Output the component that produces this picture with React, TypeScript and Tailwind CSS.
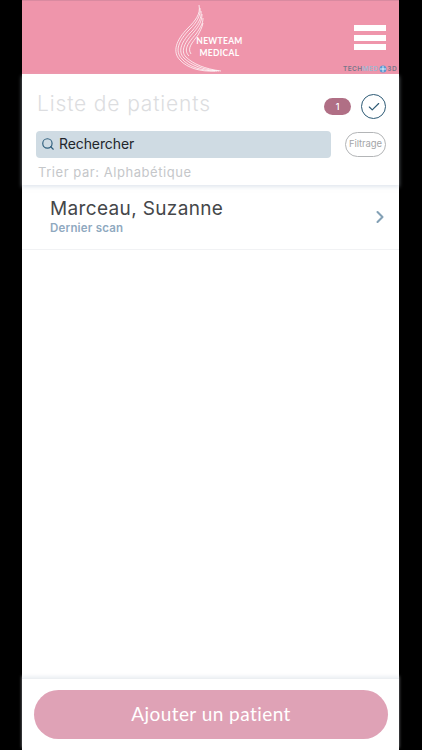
import { Check, ChevronRight, Search } from 'lucide-react';

const swooshLines = [
  'M199 4C201 13 195 20 188 27C176 39 172 51 180 59C187 67 201 71 215 70',
  'M200 7C201 15 196 22 190 28C179 39 174 50 182 58C189 66 202 70 217 70',
  'M201 10C202 17 198 23 192 30C182 40 177 50 184 57C191 64 203 69 219 70',
  'M202 13C202 20 199 25 194 31C185 41 180 50 186 56C193 63 205 68 221 70',
  'M203 17C203 23 200 27 196 33C188 42 183 49 189 55',
  'M203 22C202 27 200 30 198 34C192 42 187 47 191 53',
];

const Logo = () => (
  <div className="relative w-[110px] h-[74px] mr-[12px]">
    <svg viewBox="150 0 110 74" className="w-full h-full" fill="none" stroke="#fff">
      {swooshLines.map((d) => (
        <path key={d} d={d} strokeWidth="0.75" />
      ))}
    </svg>
    <div className="absolute left-[46px] top-[34px] w-[48px] text-center text-white text-[8.5px] leading-[12px] font-bold tracking-[0.3px] font-['Lato',sans-serif]">
      <div>NEWTEAM</div>
      <div>MEDICAL</div>
    </div>
  </div>
);

const App = () => {
  return (
    <div className="w-[422px] h-[750px] bg-black pl-[22px] overflow-hidden font-['Inter',sans-serif]">
      <div className="w-[377px] h-full bg-white flex flex-col">
        {/* Header */}
        <div className="relative h-[74px] bg-[#ef95ab] flex justify-center shrink-0 border-t border-[#d98aa0]">
          <Logo />
          <div className="absolute left-[332px] top-[24px] flex flex-col gap-[3.5px]">
            <div className="w-[32px] h-[6px] bg-white" />
            <div className="w-[32px] h-[6px] bg-white" />
            <div className="w-[32px] h-[6px] bg-white" />
          </div>
          <div className="absolute right-[2px] bottom-[1px] flex items-center text-[6.5px] leading-[8px] font-semibold tracking-[0.4px] text-[#77778a]">
            TECH<span className="text-[#9db8d2]">MED</span>
            <svg viewBox="0 0 8 8" className="w-[8px] h-[8px] mx-[0.5px]">
              <circle cx="4" cy="4" r="3.5" fill="#5b9ad4" />
              <path d="M1 4H7M4 1V7" stroke="#fff" strokeWidth="0.8" />
            </svg>
            3D
          </div>
        </div>

        {/* Title and search */}
        <div className="h-[111px] shrink-0 pl-[14px] pr-[13px] flex flex-col shadow-[0_2px_4px_rgba(200,212,224,0.55)] z-10">
          <div className="flex items-center h-[57px] pt-[8px]">
            <div className="flex-1 pl-[1px] text-[21px] leading-[28px] -mt-[6px] font-light tracking-[0.85px] text-[#dcdde0]">Liste de patients</div>
            <div className="w-[27px] h-[17px] rounded-full bg-[#b06f85] text-white text-[9px] font-medium flex items-center justify-center">1</div>
            <div className="ml-[10px] w-[25px] h-[25px] rounded-full border border-[#2d5a75] flex items-center justify-center">
              <Check size={14} strokeWidth={2} className="text-[#2d5a75]" />
            </div>
          </div>
          <div className="flex items-center">
            <div className="w-[295px] h-[27px] rounded-[4px] bg-[#cfdbe3] flex items-center pl-[5px] gap-[4px]">
              <Search size={14} strokeWidth={2} className="text-[#2f5f7d] -mt-[1px]" />
              <span className="text-[14px] leading-[20px] -mt-[1px] tracking-[-0.1px] text-[#22262b]">Rechercher</span>
            </div>
            <div className="ml-auto w-[41px] h-[25px] rounded-full border border-[#b3b5b7] flex items-center justify-center text-[9.5px] tracking-[-0.1px] text-[#a3a5a8]">Filtrage</div>
          </div>
          <div className="mt-[5px] pl-[2px] text-[13px] leading-[18px] tracking-[0.55px] text-[#c5c7ca]">Trier par: Alphabétique</div>
        </div>

        {/* Patient list */}
        <div className="flex-1">
          <div className="h-[65px] border-b border-[#f1f2f4] flex items-center pl-[28px] pr-[9px]">
            <div className="flex-1 -mt-[2px]">
              <div className="text-[19px] leading-[24px] tracking-[0.35px] text-[#45474a]">Marceau, Suzanne</div>
              <div className="text-[11.5px] leading-[14px] font-semibold tracking-[0.2px] text-[#8fa9bf]">Dernier scan</div>
            </div>
            <ChevronRight size={20} strokeWidth={2.5} className="text-[#83a0b5]" />
          </div>
        </div>

        {/* Add patient */}
        <div className="h-[72px] shrink-0 border-t border-[#eceff2] shadow-[0_-2px_3px_rgba(225,230,236,0.6)] pl-[12px] pr-[11px] pt-[11px]">
          <button className="w-full h-[49px] rounded-full bg-[#dfa2b6] text-white text-[19px] tracking-[0.45px] font-['Lato',sans-serif]">
            Ajouter un patient
          </button>
        </div>
      </div>
    </div>
  );
};

export default App;
